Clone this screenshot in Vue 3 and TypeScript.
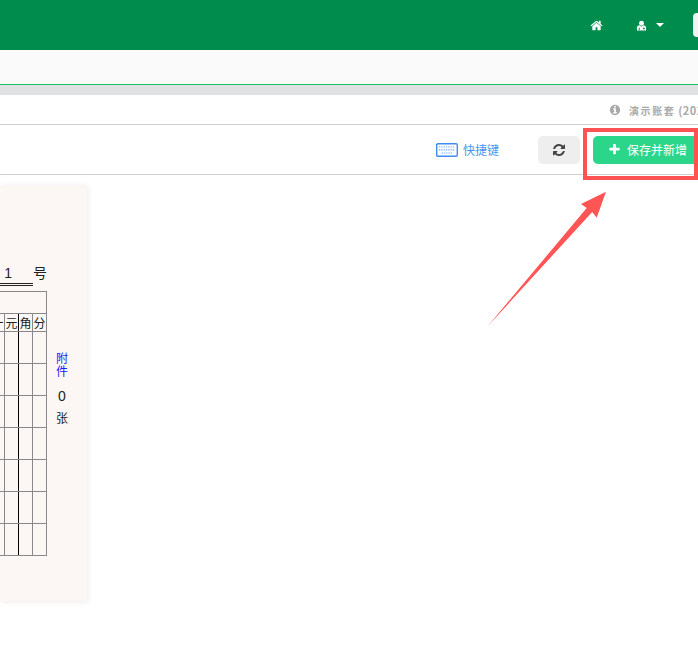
<script setup lang="ts">
const bodyRows: number[] = [1, 2, 3, 4, 5, 6, 7];
const columns: string[] = ['十', '元', '角', '分'];
</script>

<template>
  <div class="page">
    <header class="topbar">
      <svg class="home" viewBox="0 0 1792 1792"><path fill="#fff" d="M1472 992v480q0 26-19 45t-45 19h-384v-384h-256v384h-384q-26 0-45-19t-19-45v-480q0-1 .5-3t.5-3l575-474 575 474q1 2 1 6zm223-69l-62 74q-8 9-21 11h-3q-13 0-21-7l-692-577-692 577q-12 8-24 7-13-2-21-11l-62-74q-8-10-7-23.500t11-21.500l719-599q32-26 76-26t76 26l244 204v-195q0-14 9-23t23-9h192q14 0 23 9t9 23v408l219 182q10 8 11 21.500t-7 23.500z"/></svg>
      <svg class="user" viewBox="0 0 24 24"><circle cx="12" cy="7" r="5.4" fill="#fff"/><path fill="#fff" fill-rule="evenodd" d="M2 23v-6c0-3.500 3-5.500 6-5.500l4 3 4-3c3 0 6 2 6 5.500v6zM6.500 16v2.500h-1V21h3v-2.500h-1V16zm10 0v2h-1.500v1.500h1.500V21H18v-1.500h1.500V18H18v-2z"/></svg>
      <span class="caret"></span>
      <span class="avatar"></span>
    </header>

    <div class="tabbar"></div>
    <div class="strip"></div>

    <div class="notice">
      <svg class="info" viewBox="0 0 1792 1792"><path fill="#a9a9a9" d="M1152 1376v-160q0-14-9-23t-23-9h-96v-512q0-14-9-23t-23-9h-320q-14 0-23 9t-9 23v160q0 14 9 23t23 9h96v320h-96q-14 0-23 9t-9 23v160q0 14 9 23t23 9h448q14 0 23-9t9-23zm-128-896v-160q0-14-9-23t-23-9h-192q-14 0-23 9t-9 23v160q0 14 9 23t23 9h192q14 0 23-9t9-23zm640 416q0 209-103 385.500t-279.500 279.500-385.500 103-385.500-103-279.500-279.500-103-385.500 103-385.500 279.500-279.500 385.500-103 385.500 103 279.500 279.500 103 385.500z"/></svg>
      <span class="notice-text">演示账套<span class="year"> (2023)</span></span>
    </div>

    <div class="toolbar">
      <div class="shortcut">
        <svg class="keyboard" viewBox="0 0 22 14">
          <rect x="0.700" y="0.700" width="20.600" height="12.600" rx="1.200" fill="#fff" stroke="#3f8cf2" stroke-width="1.400"/>
          <path stroke="#6fa8f2" stroke-width="1.200" stroke-dasharray="1.300 1" fill="none" d="M3 4h16M3 6.800h16M5.500 10h11"/>
        </svg>
        <span>快捷键</span>
      </div>
      <button class="refresh" type="button" aria-label="刷新">
        <svg viewBox="0 0 1792 1792"><path fill="#444" d="M1639 1056q0 5-1 7-64 268-268 434.500t-478 166.500q-146 0-282.500-55t-243.500-157l-129 129q-19 19-45 19t-45-19-19-45v-448q0-26 19-45t45-19h448q26 0 45 19t19 45-19 45l-137 137q71 66 161 102t187 36q134 0 250-65t186-179q11-17 53-117 8-23 30-23h192q13 0 22.500 9.500t9.500 22.500zm25-800v448q0 26-19 45t-45 19h-448q-26 0-45-19t-19-45 19-45l138-138q-148-137-349-137-134 0-250 65t-186 179q-11 17-53 117-8 23-30 23h-199q-13 0-22.500-9.500t-9.500-22.500v-7q65-268 270-434.500t480-166.500q146 0 284 55.500t245 156.500l130-129q19-19 45-19t45 19 19 45z"/></svg>
      </button>
      <button class="save" type="button">
        <svg viewBox="0 0 1792 1792"><path fill="#fff" d="M1600 736v192q0 40-28 68t-68 28h-416v416q0 40-28 68t-68 28h-192q-40 0-68-28t-28-68v-416h-416q-40 0-68-28t-28-68v-192q0-40 28-68t68-28h416v-416q0-40 28-68t68-28h192q40 0 68 28t28 68v416h416q40 0 68 28t28 68z"/></svg>
        <span>保存并新增</span>
      </button>
    </div>

    <main class="content">
      <section class="voucher">
        <div class="number-row">
          <span class="number">1</span>
          <span class="hao">号</span>
        </div>
        <div class="sheet">
          <table class="grid">
            <colgroup>
              <col class="c0" />
              <col class="c1" />
              <col class="c2" />
              <col class="c3" />
            </colgroup>
            <tbody>
              <tr class="r-top"><td colspan="4"></td></tr>
              <tr class="r-head">
                <td v-for="(c, i) in columns" :key="c" :class="{ 'heavy': i === 1 }">{{ c }}</td>
              </tr>
              <tr v-for="r in bodyRows" :key="r" class="r-body">
                <td></td>
                <td class="heavy"></td>
                <td></td>
                <td></td>
              </tr>
            </tbody>
          </table>
          <div class="attach">
            <a class="attach-link">附<br />件</a>
            <span class="attach-count">0</span>
            <span class="attach-unit">张</span>
          </div>
        </div>
      </section>
    </main>

    <div class="callout"></div>
    <svg class="arrow" viewBox="0 0 130 145">
      <path fill="#ff5555" d="M1.300 142.700 L100.700 24 L95 20 L120 7.700 L110.700 33.700 L106.200 28 Z"/>
    </svg>
  </div>
</template>

<style>
html, body { margin: 0; background: #fff; overflow: hidden; }
</style>

<style scoped>
.page {
  position: relative;
  width: 698px;
  height: 659px;
  overflow: hidden;
  background: #fff;
  font-family: "Noto Sans CJK SC", "Liberation Sans", sans-serif;
}
.topbar {
  height: 50px;
  background: #008c4c;
  display: flex;
  align-items: center;
  justify-content: flex-end;
  margin-right: -8px;
}
.home { width: 13px; height: 13px; margin-right: 33px; }
.user { width: 11px; height: 11px; margin-right: 9px; }
.caret {
  width: 0;
  height: 0;
  border-left: 4px solid transparent;
  border-right: 4px solid transparent;
  border-top: 4px solid #fff;
  margin-right: 29px;
}
.avatar {
  width: 13px;
  height: 24px;
  background: #f4f4f4;
  border-radius: 4px;
}
.tabbar {
  height: 34px;
  background: #fafafa;
  border-bottom: 1px solid #16c06a;
}
.strip { height: 10px; background: #e0e1e3; }
.notice {
  height: 29px;
  border-bottom: 1px solid #cfcfcf;
  display: flex;
  align-items: center;
  padding-left: 609px;
  gap: 8px;
  white-space: nowrap;
}
.info { width: 12px; height: 12px; flex: none; }
.notice-text {
  font-size: 10px;
  font-weight: 700;
  letter-spacing: 1.600px;
  color: #a9a9a9;
  flex: none;
}
.year { letter-spacing: 0.400px; font-size: 11px; }
.toolbar {
  height: 49px;
  border-bottom: 1px solid #cfcfcf;
  display: flex;
  align-items: center;
  justify-content: flex-end;
}
.shortcut {
  display: flex;
  align-items: center;
  gap: 5px;
  margin-right: 39px;
  color: #3f98ee;
  font-size: 12px;
}
.keyboard { width: 22px; height: 14px; }
.refresh {
  width: 42px;
  height: 28px;
  margin-right: 13px;
  padding: 0;
  border: 0;
  border-radius: 5px;
  background: #eeeeee;
  display: flex;
  align-items: center;
  justify-content: center;
}
.refresh svg { width: 14px; height: 14px; }
.save {
  width: 111px;
  height: 28px;
  margin-right: -6px;
  padding: 0 0 0 15px;
  border: 0;
  border-radius: 5px;
  background: #2bd68a;
  color: #fff;
  display: flex;
  align-items: center;
  gap: 6px;
  font-family: inherit;
  font-size: 12px;
  flex: none;
}
.save svg { width: 13px; height: 13px; flex: none; }
.content { padding-top: 10px; }
.voucher {
  width: 87px;
  height: 416px;
  background: #fcf7f4;
  box-shadow: 1px 1px 6px rgba(0, 0, 0, 0.08);
  overflow: hidden;
  color: #222;
}
.number-row {
  height: 106px;
  display: flex;
  align-items: flex-start;
  font-size: 14px;
  line-height: 20px;
}
.number {
  width: 33px;
  box-sizing: border-box;
  height: 101px;
  padding: 78px 21px 0 0;
  text-align: right;
  font-family: "Liberation Sans", sans-serif;
  border-bottom: 3px double #222;
}
.hao { margin-top: 77px; }
.sheet { display: flex; align-items: flex-start; }
.grid {
  width: 56px;
  margin-left: -10px;
  table-layout: fixed;
  border-collapse: collapse;
  flex: none;
  font-size: 12px;
}
.c0, .c1, .c2, .c3 { width: 14px; }
.grid td {
  border: 1px solid #888;
  padding: 0;
  text-align: center;
  overflow: hidden;
  white-space: nowrap;
}
.grid td.heavy { border-right-color: #000; }
.r-top { height: 22px; }
.r-head { height: 18px; line-height: 16px; }
.r-body { height: 32px; }
.attach {
  width: 30px;
  padding-top: 60px;
  display: flex;
  flex-direction: column;
  align-items: center;
  font-size: 12px;
  line-height: 14px;
  text-align: center;
}
.attach-link { color: #1a1aff; line-height: 13px; }
.attach-count { font-family: "Liberation Sans", sans-serif; font-size: 14px; margin-top: 12px; }
.attach-unit { margin-top: 8px; }
.callout {
  position: absolute;
  left: 583px;
  top: 128px;
  width: 115px;
  height: 52px;
  box-sizing: border-box;
  border: 4px solid #ff5252;
}
.arrow {
  position: absolute;
  left: 486px;
  top: 184px;
  width: 130px;
  height: 145px;
}
</style>
